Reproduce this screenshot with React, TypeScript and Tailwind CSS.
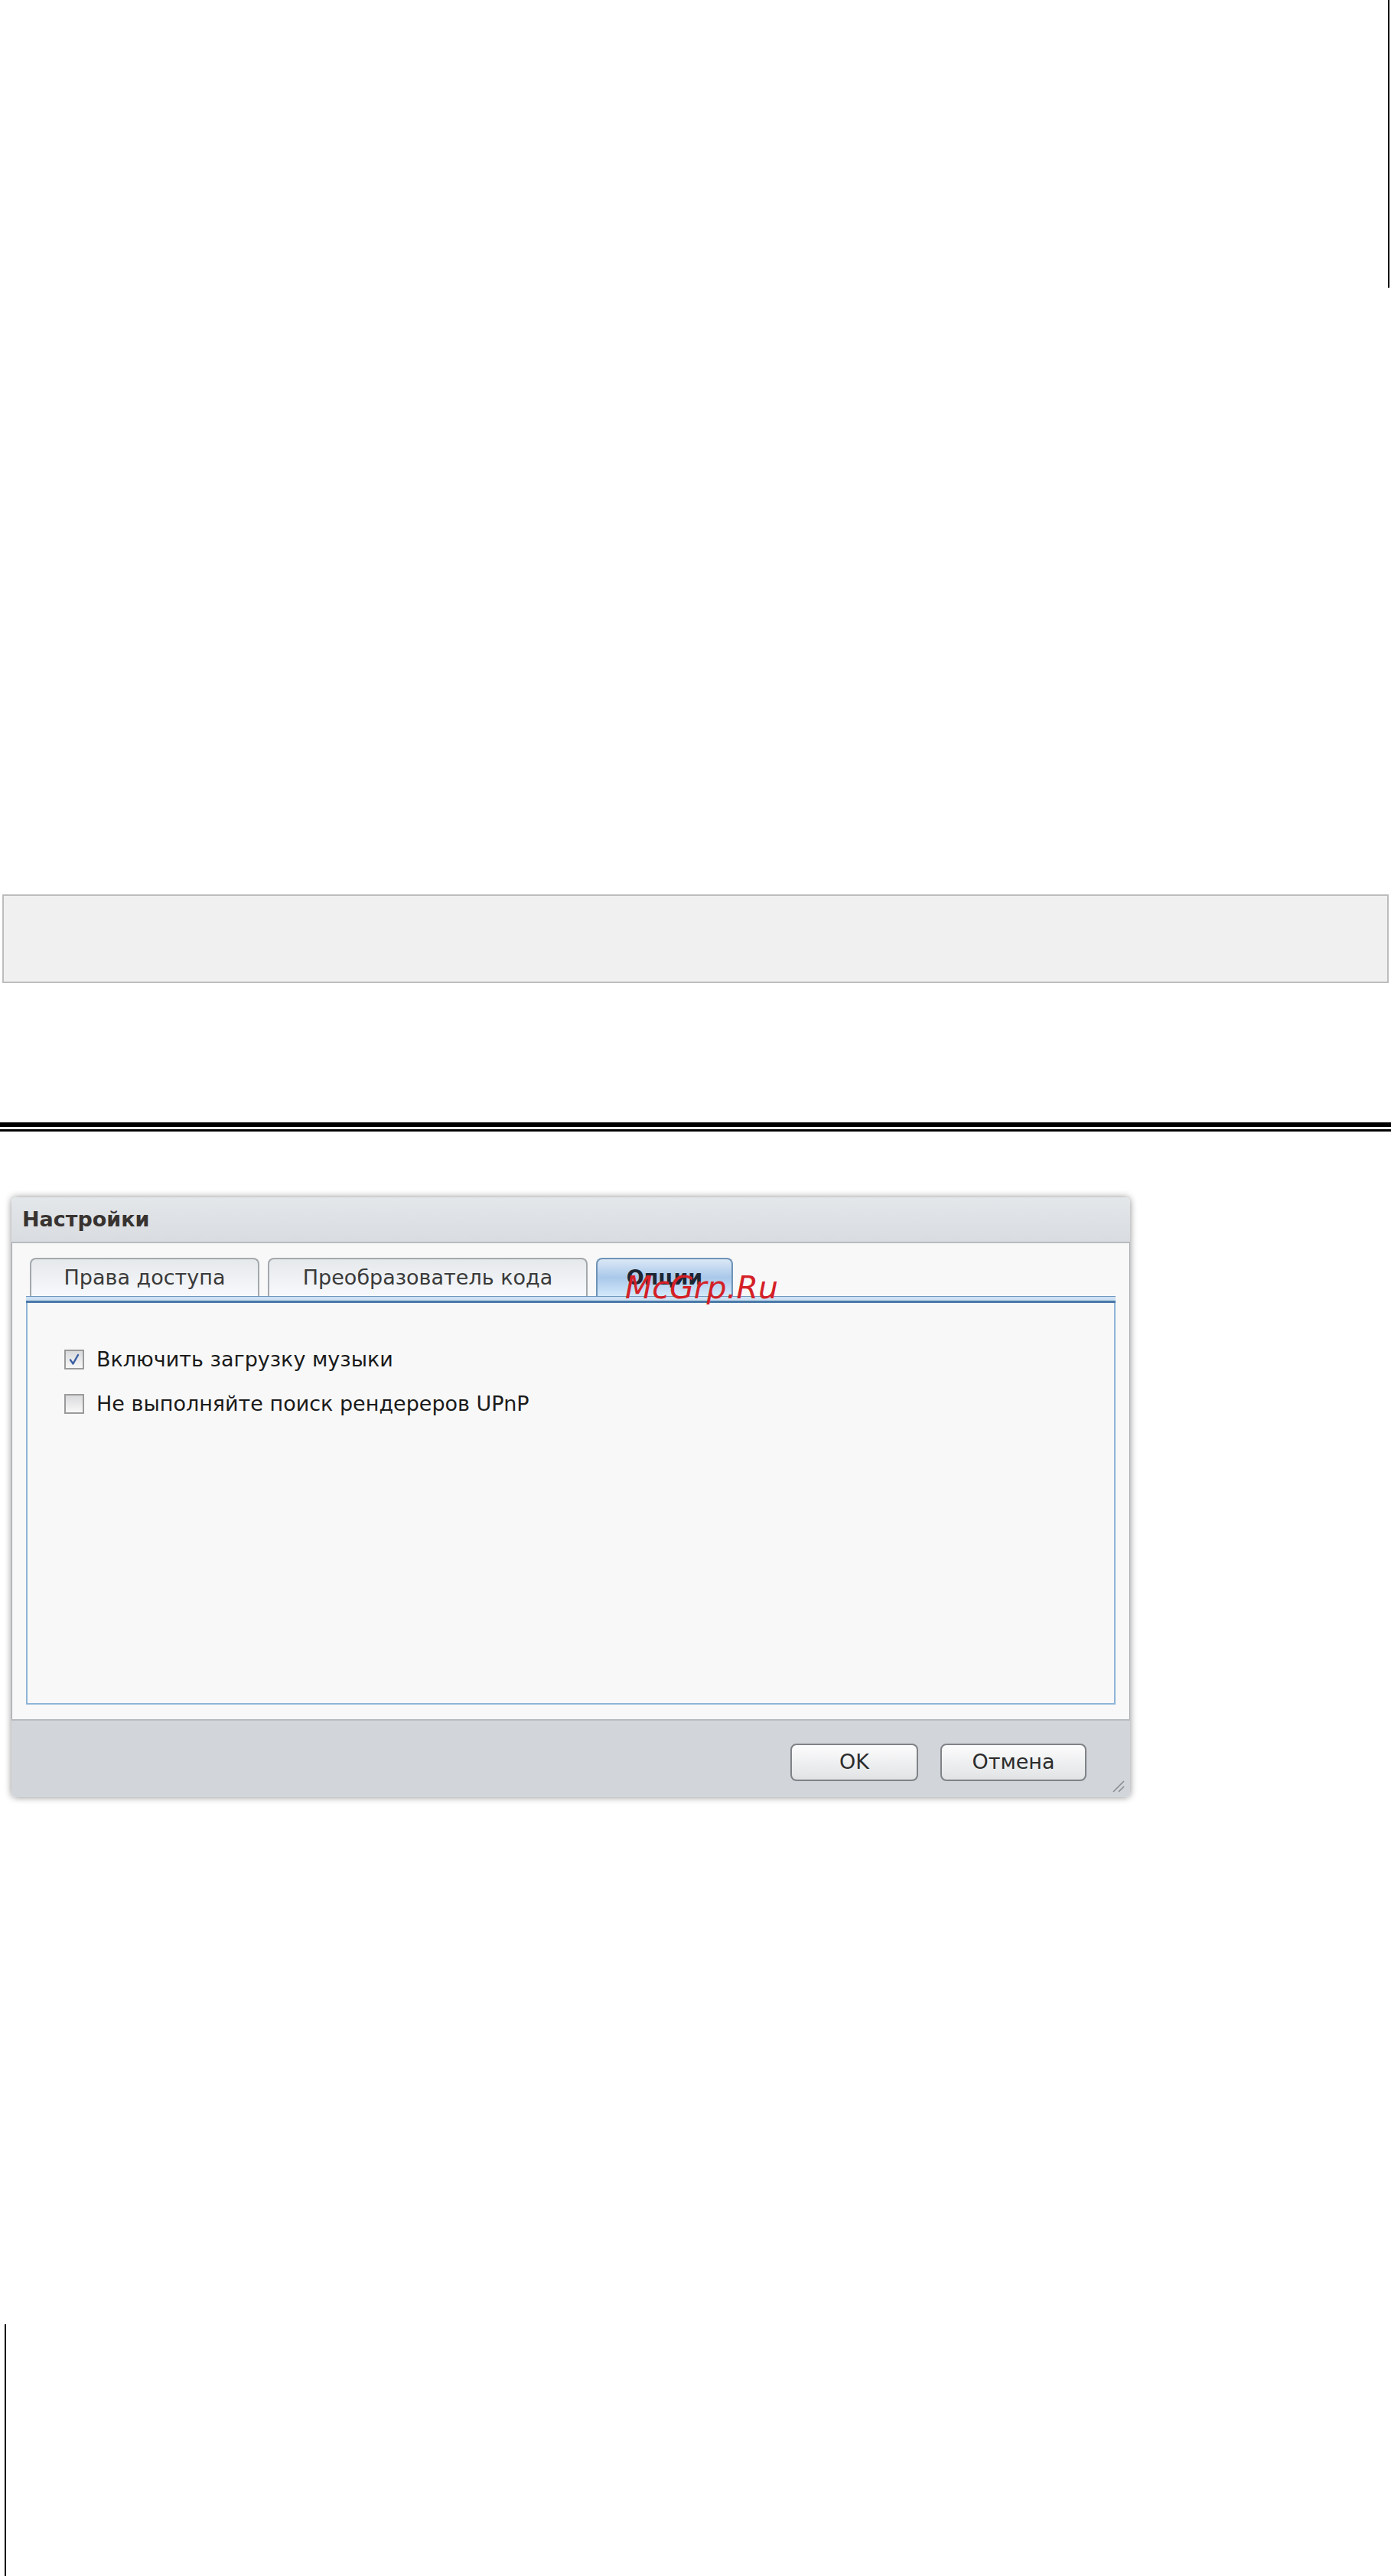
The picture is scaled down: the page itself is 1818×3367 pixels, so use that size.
const CheckBox = ({ checked }: { checked?: boolean }) => (
  <span className="flex h-[26px] w-[26px] shrink-0 items-center justify-center border-2 border-[#9b9b9b] bg-linear-to-b from-[#d9dadc] to-[#f8f8f8]">
    {checked && (
      <svg width="18" height="18" viewBox="0 0 18 18">
        <path d="M4 9.5 L7.5 14.5 L14 3" fill="none" stroke="#3d5fa3" strokeWidth="2.4" strokeLinecap="round" strokeLinejoin="round" />
      </svg>
    )}
  </span>
);

const Tab = ({ label, width, active }: { label: string; width: string; active?: boolean }) => (
  <div
    className={
      active
        ? `flex h-[50px] ${width} items-center justify-center rounded-t-[8px] border-2 border-b-0 border-[#6e93b7] bg-linear-to-b from-[#dbe8f6] via-[#a9c8ea] to-[#d4e9fb] text-[27px] font-bold text-[#1c2633]`
        : `flex h-[50px] ${width} items-center justify-center rounded-t-[8px] border-2 border-b-0 border-[#a3a8ad] bg-linear-to-b from-[#e6e9ec] to-[#f7f9fc] text-[27px] text-[#3a3a3a]`
    }
  >
    {label}
  </div>
);

const Button = ({ label, width }: { label: string; width: string }) => (
  <button
    type="button"
    className={`flex h-[49px] ${width} items-center justify-center rounded-[8px] border-2 border-[#7f8286] bg-linear-to-b from-[#fcfcfc] to-[#e1e3e5] text-[27px] text-[#2c2c2c]`}
  >
    {label}
  </button>
);

const SettingsDialog = () => (
  <div className="relative ml-[15px] mt-[86px] w-[1462px] rounded-[6px] font-['DejaVu_Sans',sans-serif] shadow-[0_0_10px_rgba(0,0,0,0.45)]">
    {/* header */}
    <div className="flex h-[60px] items-center rounded-t-[6px] border-b-2 border-[#b7bbbf] bg-linear-to-b from-[#e3e7ea] to-[#d9dde1] pl-[14px]">
      <span className="text-[27px] font-bold text-[#383330]">Настройки</span>
    </div>

    {/* body */}
    <div className="border-x border-[#a4a8ac] bg-[#f8f8f8] pb-[19px] pt-[19px]">
      <div className="relative flex items-end gap-[11px] pl-[23px]">
        <Tab label="Права доступа" width="w-[300px]" />
        <Tab label="Преобразователь кода" width="w-[418px]" />
        <Tab label="Опции" width="w-[179px]" active />
        <span className="absolute left-[801px] top-[19px] text-[41px] italic leading-none text-[#d42026]">
          McGrp.Ru
        </span>
      </div>

      <div className="mx-[18px]">
        <div className="h-[1px] bg-[#6f97bd]" />
        <div className="h-[5px] bg-[#cde1f3]" />
        <div className="h-[3px] bg-[#4a79a8]" />
        <div className="flex h-[525px] flex-col gap-[32px] border-x-2 border-b-2 border-[#8fb5d8] pl-[48px] pt-[61px]">
          <label className="flex h-[26px] items-center gap-[16px] text-[27px] text-[#1a1a1a]">
            <CheckBox checked />
            Включить загрузку музыки
          </label>
          <label className="flex h-[26px] items-center gap-[16px] text-[27px] text-[#1a1a1a]">
            <CheckBox />
            Не выполняйте поиск рендереров UPnP
          </label>
        </div>
      </div>
    </div>

    {/* footer */}
    <div className="flex h-[102px] items-start justify-end gap-[29px] rounded-b-[6px] border-t-2 border-[#b8bcc0] bg-[#d2d6da] pr-[57px] pt-[30px]">
      <Button label="OK" width="w-[167px]" />
      <Button label="Отмена" width="w-[191px]" />
    </div>
    <svg className="absolute bottom-[6px] right-[7px]" width="18" height="18" viewBox="0 0 18 18">
      <path d="M3 17 L17 3 M10 17 L17 10" stroke="#8a8d90" strokeWidth="1.6" />
    </svg>
  </div>
);

export default function App() {
  return (
    <div className="flex h-[3367px] w-[1818px] flex-col bg-white">
      <div className="flex h-[376px] justify-end pr-[2px]">
        <div className="w-[2px] bg-black" />
      </div>

      <div className="mx-[3px] mt-[793px] h-[116px] border-2 border-[#bdbdbd] bg-[#f0f0f0]" />

      <div className="mt-[182px] h-[6px] bg-black" />
      <div className="mt-[3px] h-[3px] bg-black" />

      <SettingsDialog />

      <div className="ml-[6px] mt-auto h-[329px] w-[2px] bg-black" />
    </div>
  );
}
